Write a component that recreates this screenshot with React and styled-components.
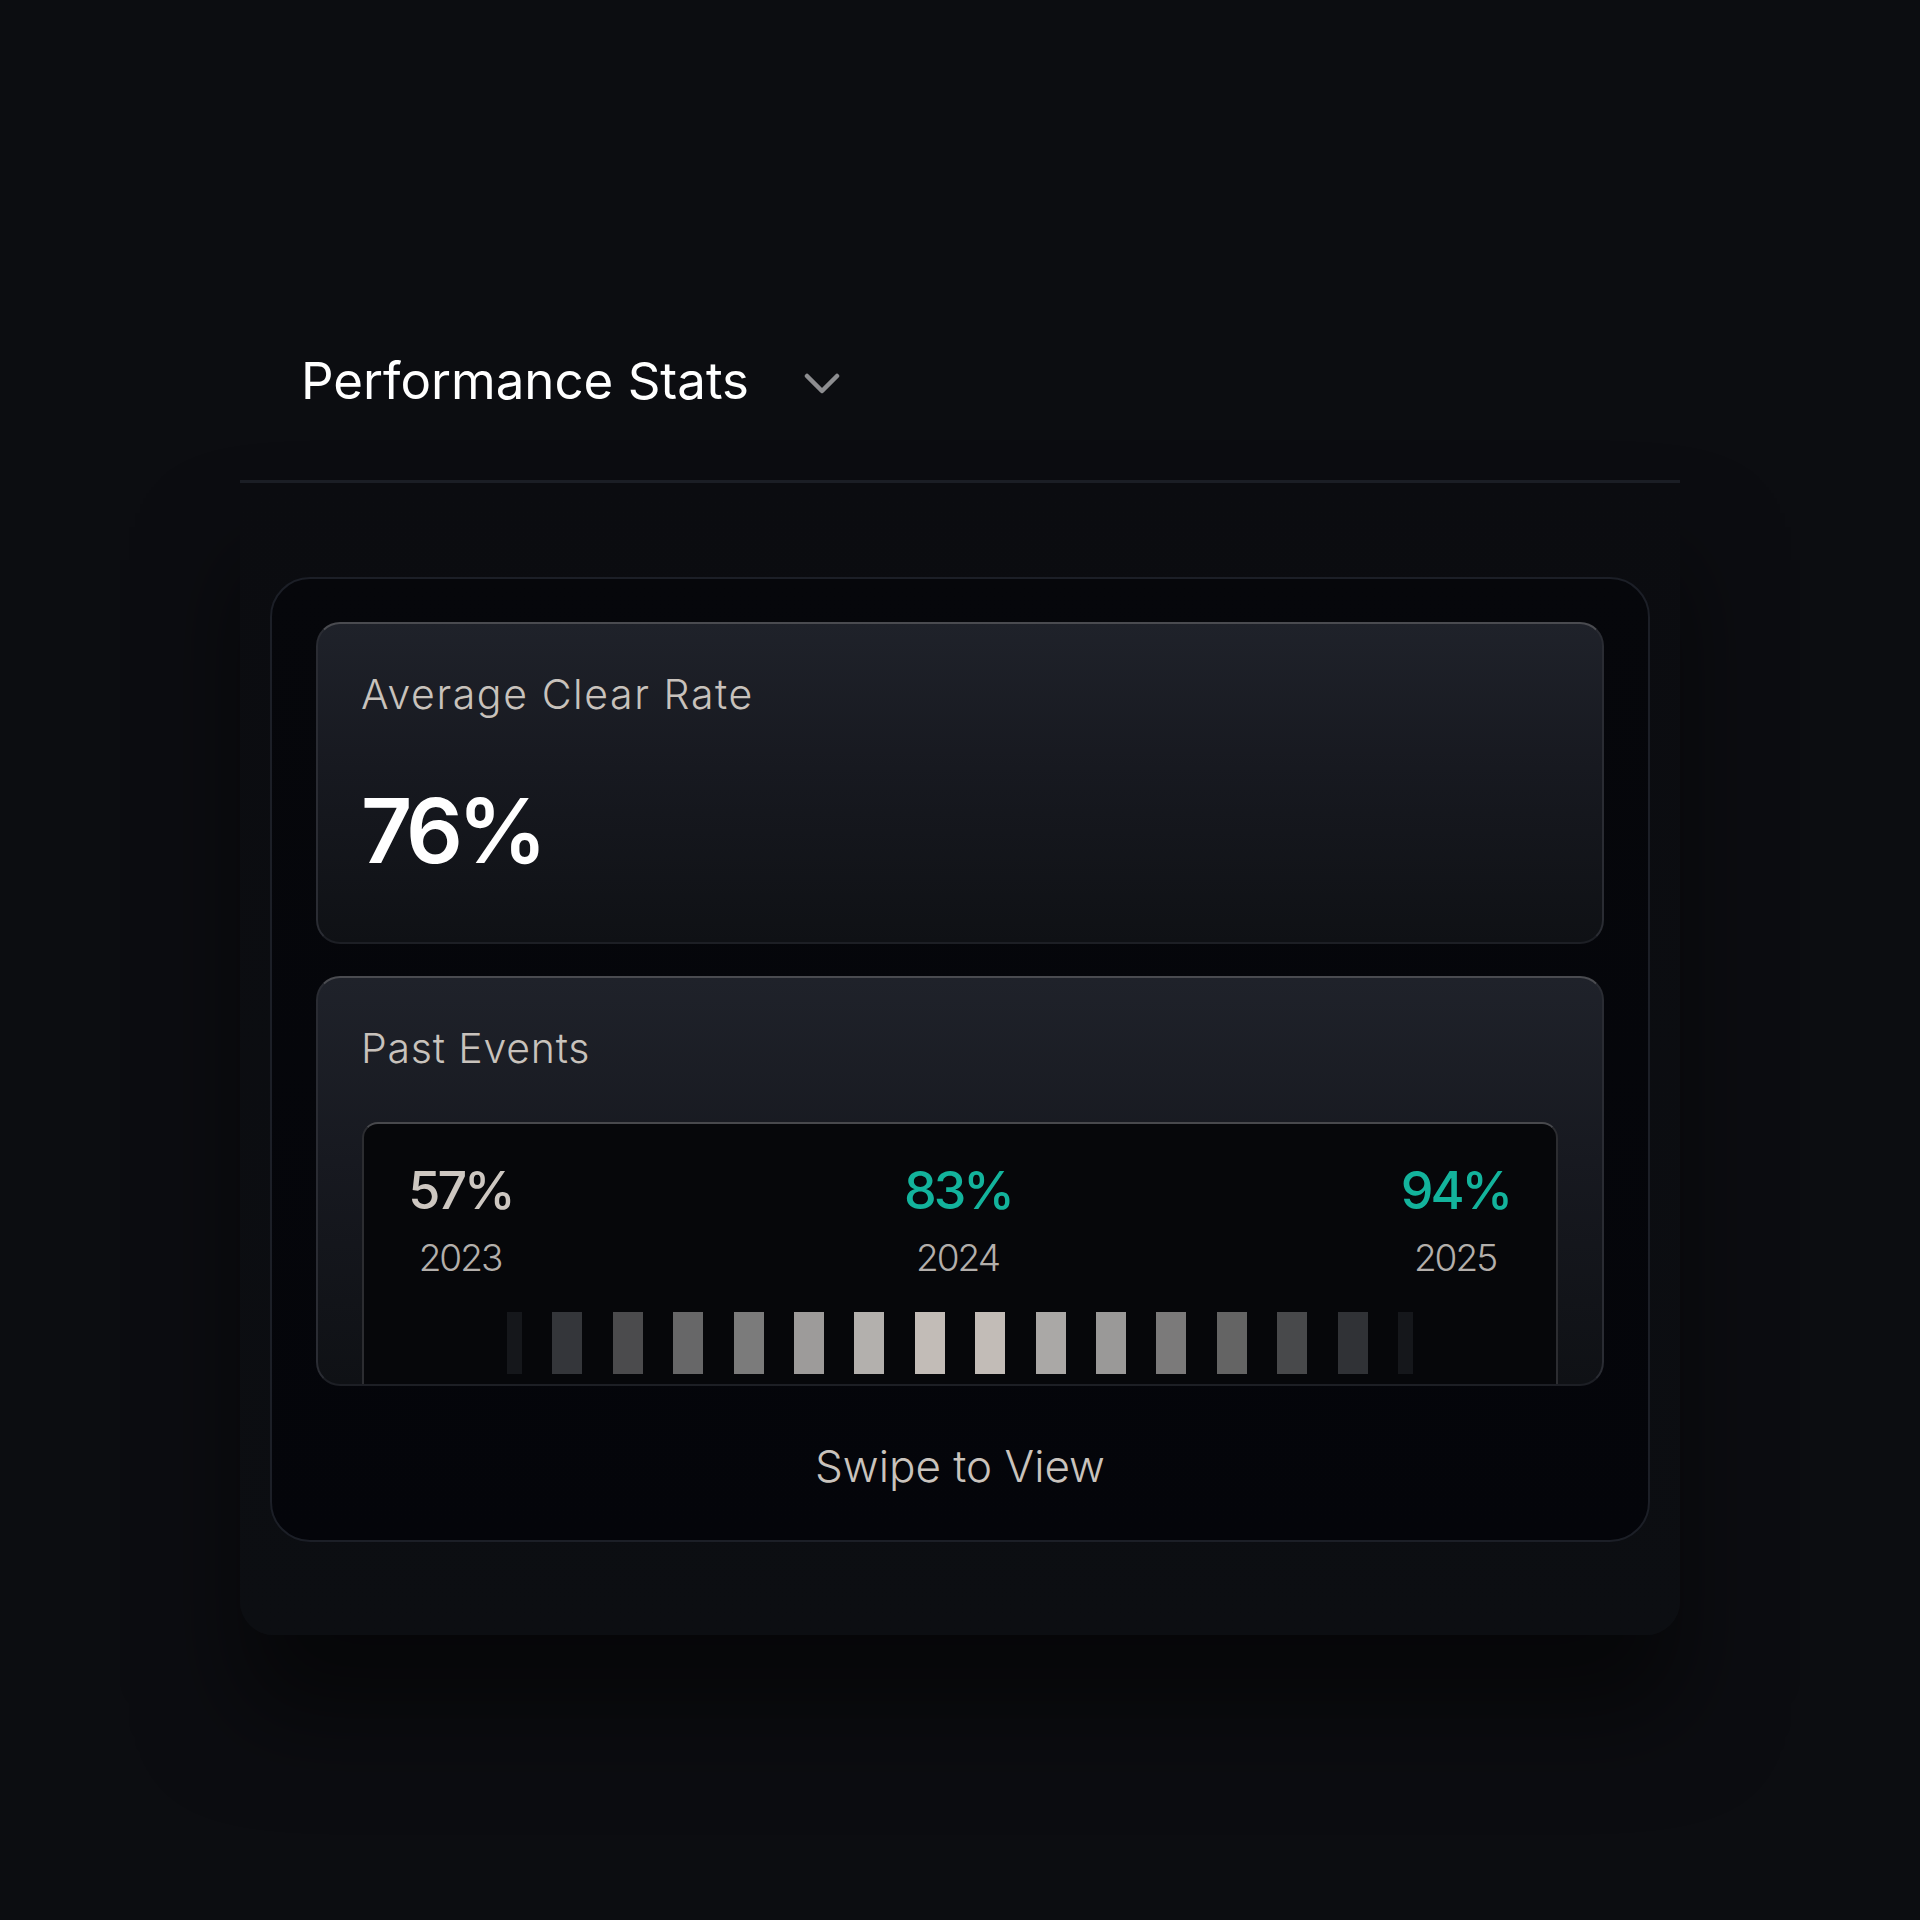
import React from "react";
import styled, { createGlobalStyle } from "styled-components";

const GlobalStyle = createGlobalStyle`
  html, body {
    margin: 0;
    padding: 0;
    background: #0c0d11;
  }
  body {
    font-family: Inter, "Noto Sans", "Liberation Sans", sans-serif;
    -webkit-font-smoothing: antialiased;
  }
  * { box-sizing: border-box; }
`;

const Page = styled.div`
  width: 1920px;
  min-height: 1920px;
  padding-top: 355px;
  background: #0c0d11;
`;

const Section = styled.section`
  width: 1440px;
  margin: 0 auto;
`;

const Header = styled.header`
  display: flex;
  align-items: center;
  gap: 55px;
  padding: 0 0 74px 61px;
`;

const Title = styled.h2`
  margin: 0;
  font-size: 51px;
  line-height: 1;
  font-weight: 400;
  color: #ffffff;
`;

const Chevron = styled.svg`
  width: 36px;
  height: 22px;
  display: block;
  margin-top: 6px;
`;

const Panel = styled.div`
  border-top: 3px solid #1b1e25;
  background: linear-gradient(180deg, #0b0c10 0%, #0c0e12 100%);
  border-radius: 0 0 34px 34px;
  padding: 94px 30px 93px;
  box-shadow: 0 80px 100px rgba(0, 0, 0, 0.5);
`;

const DarkCard = styled.div`
  border: 2px solid #1c1f27;
  border-radius: 40px;
  background: linear-gradient(180deg, #06070b 0%, #04050a 100%);
  padding: 43px 44px 52px;
  display: flex;
  flex-direction: column;
`;

const StatCard = styled.div`
  height: ${(p) => p.$height}px;
  margin-bottom: ${(p) => p.$gap}px;
  border: 2px solid #2a2c33;
  border-top-color: #4a4b50;
  border-bottom-color: #1d1f25;
  border-radius: 24px;
  background: linear-gradient(180deg, #1f222a 0%, #171920 45%, #0f1115 100%);
  padding: 50px 44px 0 43px;
  overflow: hidden;
  display: flex;
  flex-direction: column;
`;

const Label = styled.div`
  font-size: 41px;
  line-height: 1;
  font-weight: 300;
  color: #c8c2bc;
  letter-spacing: ${(p) => p.$ls}px;
`;

const BigValue = styled.div`
  margin-top: 71px;
  font-size: 89px;
  line-height: 1;
  font-weight: 600;
  color: #ffffff;
  letter-spacing: -5px;
`;

const EventsPanel = styled.div`
  margin-top: 53px;
  margin-left: 1px;
  height: 320px;
  flex-shrink: 0;
  border: 2.5px solid #2c2d31;
  border-top-color: #48494d;
  border-radius: 16px;
  background: #06070a;
  padding-top: 41px;
  display: flex;
  flex-direction: column;
  align-items: center;
`;

const YearsRow = styled.div`
  align-self: stretch;
  display: flex;
  justify-content: space-between;
  padding: 0 42px 0 35px;
`;

const YearCol = styled.div`
  width: 120px;
  display: flex;
  flex-direction: column;
  align-items: center;
  gap: 22px;
`;

const Pct = styled.div`
  font-size: 52px;
  line-height: 1;
  font-weight: 500;
  letter-spacing: -3px;
  margin-right: -3px;
  color: ${(p) => (p.$accent ? "#13b39c" : "#cdc7c1")};
`;

const Year = styled.div`
  font-size: 37px;
  line-height: 1;
  font-weight: 300;
  letter-spacing: -2px;
  margin-right: -2px;
  color: #b3afab;
`;

const Bars = styled.div`
  margin-top: 36px;
  display: flex;
  gap: 30.4px;
`;

const Bar = styled.div`
  height: 62px;
  width: ${(p) => p.$w}px;
  background: ${(p) => p.$c};
`;

const Swipe = styled.div`
  margin-top: 58px;
  text-align: center;
  font-size: 44px;
  line-height: 1;
  font-weight: 300;
  color: #c9c3bd;
`;

const barColors = [
  "#15171b", "#34363a", "#4b4b4d", "#676768", "#7b7b7b", "#9d9b9a",
  "#b3b0ad", "#c2bcb7", "#c2bcb7", "#aaa8a6", "#9a9998", "#7b7a7a",
  "#646464", "#48494b", "#303236", "#15171b",
];

const years = [
  { pct: "57%", year: "2023", accent: false },
  { pct: "83%", year: "2024", accent: true },
  { pct: "94%", year: "2025", accent: true },
];

export default function App() {
  return (
    <>
      <GlobalStyle />
      <Page>
        <Section>
          <Header>
            <Title>Performance Stats</Title>
            <Chevron viewBox="0 0 36 22" fill="none">
              <path
                d="M3 3 L18 18 L33 3"
                stroke="#8d8d90"
                strokeWidth="4.5"
                strokeLinecap="round"
                strokeLinejoin="round"
              />
            </Chevron>
          </Header>
          <Panel>
            <DarkCard>
              <StatCard $height={322} $gap={32}>
                <Label $ls={1.6}>Average Clear Rate</Label>
                <BigValue>76%</BigValue>
              </StatCard>
              <StatCard $height={410} $gap={0}>
                <Label $ls={0.8}>Past Events</Label>
                <EventsPanel>
                  <YearsRow>
                    {years.map((y) => (
                      <YearCol key={y.year}>
                        <Pct $accent={y.accent}>{y.pct}</Pct>
                        <Year>{y.year}</Year>
                      </YearCol>
                    ))}
                  </YearsRow>
                  <Bars>
                    {barColors.map((c, i) => (
                      <Bar
                        key={i}
                        $c={c}
                        $w={i === 0 || i === barColors.length - 1 ? 15 : 30}
                      />
                    ))}
                  </Bars>
                </EventsPanel>
              </StatCard>
              <Swipe>Swipe to View</Swipe>
            </DarkCard>
          </Panel>
        </Section>
      </Page>
    </>
  );
}
